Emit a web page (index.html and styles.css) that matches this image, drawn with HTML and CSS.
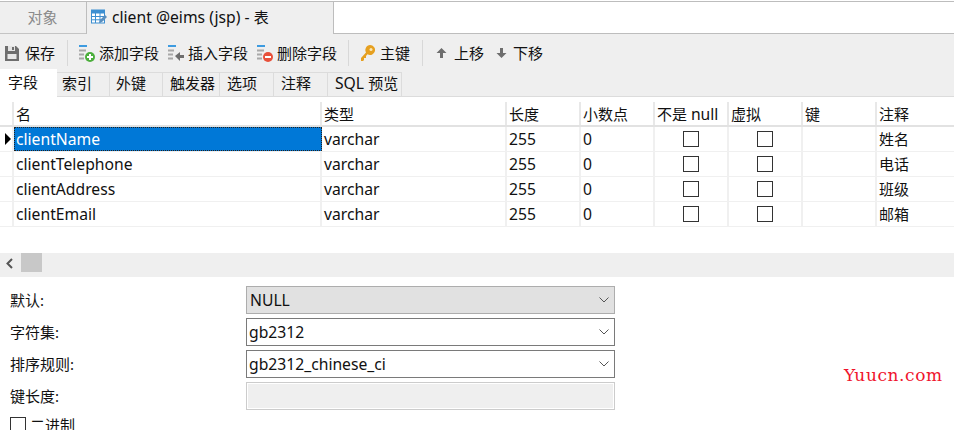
FILE: index.html
```html
<!DOCTYPE html>
<html lang="zh">
<head>
<meta charset="utf-8">
<title>client @eims (jsp) - 表</title>
<link rel="stylesheet" href="styles.css">
</head>
<body>
<div class="tabbar">
  <div class="tab tab-objects">对象</div>
  <div class="tab tab-active">
    <svg class="tab-icon" width="16" height="16" viewBox="0 0 16 16"><rect x="0.5" y="1" width="13" height="13" fill="#fff" stroke="#3d8fd1"/><rect x="0.5" y="1" width="13" height="3.5" fill="#3d8fd1"/><path d="M4.5 4v10M9 4v10M1 7.5h12M1 10.8h12" stroke="#3d8fd1"/><path d="M8 14l1-3 5-5 2 2-5 5z" fill="#5a8fbf"/></svg>
    <span><span class="en">client @eims (jsp) - </span>表</span>
  </div>
  <div class="tab-rest"></div>
</div>

<div class="toolbar">
  <div class="tool tool-save">
    <svg width="14" height="16" viewBox="0 0 14 16"><path d="M0 1h11l3 3v12H0z" fill="#6e6e6e"/><rect x="3" y="1" width="7" height="5" fill="#e4e4e4"/><rect x="7" y="2" width="2" height="3" fill="#6e6e6e"/><rect x="2.500" y="9" width="9" height="5" fill="#e8e8e8"/></svg>
    <span>保存</span>
  </div>
  <i class="sep sep-a"></i>
  <div class="tool tool-add">
    <svg width="16" height="18" viewBox="0 0 16 18"><rect y="1" width="8" height="2" fill="#3d9be0"/><path d="M0 6.500h7M0 10.500h5M0 14.500h5" stroke="#a8a8a8" stroke-width="2"/><circle cx="11" cy="13" r="5" fill="#4cae3c"/><path d="M8 13h6M11 10v6" stroke="#fff" stroke-width="2"/></svg>
    <span>添加字段</span>
  </div>
  <div class="tool tool-insert">
    <svg width="16" height="18" viewBox="0 0 16 18"><rect y="1" width="8" height="2" fill="#3d9be0"/><path d="M0 6.500h6M0 10.500h5M0 14.500h5" stroke="#a8a8a8" stroke-width="2"/><path d="M7 12l5-4v3h4v3h-4v3z" fill="#6e6e6e"/></svg>
    <span>插入字段</span>
  </div>
  <div class="tool tool-delete">
    <svg width="16" height="18" viewBox="0 0 16 18"><rect y="1" width="8" height="2" fill="#3d9be0"/><path d="M0 6.500h7M0 10.500h5M0 14.500h5" stroke="#a8a8a8" stroke-width="2"/><circle cx="11" cy="13" r="5" fill="#e8503a"/><path d="M8 13h6" stroke="#fff" stroke-width="2"/></svg>
    <span>删除字段</span>
  </div>
  <i class="sep sep-b"></i>
  <div class="tool tool-key">
    <svg width="14" height="16" viewBox="0 0 14 16"><path d="M9 0a5 5 0 1 1-2.500 9.300L5 11v2H3v2l-1 1H0v-3l5-5.500A5 5 0 0 1 9 0z" fill="#e6a020"/><circle cx="10" cy="4.500" r="1.500" fill="#fbe7b5"/></svg>
    <span>主键</span>
  </div>
  <i class="sep sep-c"></i>
  <div class="tool tool-up">
    <svg width="11" height="12" viewBox="0 0 11 12"><path d="M5.500 1L10.500 6H7v5H4V6H.5z" fill="#6e6e6e"/></svg>
    <span>上移</span>
  </div>
  <div class="tool tool-down">
    <svg width="11" height="12" viewBox="0 0 11 12"><path d="M5.500 11L10.500 6H7V1H4v5H.5z" fill="#6e6e6e"/></svg>
    <span>下移</span>
  </div>
</div>

<div class="subtabs">
  <div class="subtab subtab-active">字段</div>
  <div class="subtab w53 first">索引</div>
  <div class="subtab w53">外键</div>
  <div class="subtab w57">触发器</div>
  <div class="subtab w54">选项</div>
  <div class="subtab w54">注释</div>
  <div class="subtab w74"><span class="en">SQL </span>预览</div>
</div>

<div class="grid">
  <div class="row head">
    <div class="c c0"></div><div class="c">名</div><div class="c">类型</div><div class="c">长度</div><div class="c">小数点</div><div class="c"><span>不是 <span class="en">null</span></span></div><div class="c">虚拟</div><div class="c">键</div><div class="c">注释</div>
  </div>
  <div class="row">
    <div class="c c0"><i class="pointer"></i></div><div class="c en selected">clientName</div><div class="c en">varchar</div><div class="c en">255</div><div class="c en">0</div><div class="c cc"><i class="check"></i></div><div class="c cc"><i class="check"></i></div><div class="c"></div><div class="c">姓名</div>
  </div>
  <div class="row">
    <div class="c c0"></div><div class="c en">clientTelephone</div><div class="c en">varchar</div><div class="c en">255</div><div class="c en">0</div><div class="c cc"><i class="check"></i></div><div class="c cc"><i class="check"></i></div><div class="c"></div><div class="c">电话</div>
  </div>
  <div class="row">
    <div class="c c0"></div><div class="c en">clientAddress</div><div class="c en">varchar</div><div class="c en">255</div><div class="c en">0</div><div class="c cc"><i class="check"></i></div><div class="c cc"><i class="check"></i></div><div class="c"></div><div class="c">班级</div>
  </div>
  <div class="row">
    <div class="c c0"></div><div class="c en">clientEmail</div><div class="c en">varchar</div><div class="c en">255</div><div class="c en">0</div><div class="c cc"><i class="check"></i></div><div class="c cc"><i class="check"></i></div><div class="c"></div><div class="c">邮箱</div>
  </div>
</div>

<div class="hscroll">
  <svg class="hscroll-arrow" width="9" height="11" viewBox="0 0 9 11"><path d="M7 1L2.500 5.500 7 10" fill="none" stroke="#555" stroke-width="2"/></svg>
  <div class="hscroll-thumb"></div>
</div>

<div class="form">
  <label class="lbl">默认:</label>
  <div class="select select-disabled"><span class="en">NULL</span><svg width="10" height="6" viewBox="0 0 10 6"><path d="M.5 .5L5 5 9.500 .5" fill="none" stroke="#555"/></svg></div>
  <label class="lbl">字符集:</label>
  <div class="select"><span class="en">gb2312</span><svg width="10" height="6" viewBox="0 0 10 6"><path d="M.5 .5L5 5 9.500 .5" fill="none" stroke="#555"/></svg></div>
  <label class="lbl">排序规则:</label>
  <div class="select"><span class="en">gb2312_chinese_ci</span><svg width="10" height="6" viewBox="0 0 10 6"><path d="M.5 .5L5 5 9.500 .5" fill="none" stroke="#555"/></svg></div>
  <label class="lbl">键长度:</label>
  <div class="input-disabled"></div>
</div>
<div class="binary"><i class="check"></i><span>二进制</span></div>
<div class="watermark">Yuucn.com</div>
</body>
</html>
```
FILE: styles.css
```css
* { box-sizing: border-box; }
html, body { margin: 0; padding: 0; }
body {
  position: relative;
  width: 954px;
  height: 430px;
  overflow: hidden;
  background: #fff;
  color: #111;
  font: 15px/20px "Noto Sans", "Noto Sans CJK SC", sans-serif;
}
.en { font-size: 15.7px; }
.tabbar {
  display: flex;
  height: 33px;
  margin-top: 1px;
  border-top: 1px solid #bdbdbd;
  background: #efefef;
}
.tab { display: flex; align-items: center; height: 32px; padding-bottom: 2px; }
.tab-objects {
  width: 86px;
  justify-content: center;
  color: #8a8a8a;
  border-bottom: 1px solid #c4c4c4;
  padding-right: 1px;
}
.tab-active {
  width: 247px;
  gap: 5px;
  padding-left: 4px;
  border-left: 1px solid #bdbdbd;
  color: #111;
}
.tab-rest {
  flex: 1;
  height: 32px;
  background: #fff;
  border-left: 1px solid #bdbdbd;
  border-bottom: 1px solid #bdbdbd;
}
.toolbar {
  display: flex;
  align-items: center;
  height: 36px;
  padding: 2px 0 0 5px;
  background: #efefef;
}
.tool { display: flex; align-items: center; }
.tool-save { gap: 6px; }
.tool-add, .tool-insert, .tool-delete { gap: 4px; }
.tool-insert, .tool-delete { margin-left: 9px; }
.tool-key { gap: 5px; }
.tool-up { gap: 7px; }
.tool-down { gap: 6px; margin-left: 12px; }
.sep { width: 1px; height: 26px; background: #d8d8d8; }
.sep-a { margin: 0 11px 0 12px; }
.sep-b { margin: 0 12px 0 11px; }
.sep-c { margin: 0 13px 0 12px; }
.subtabs {
  display: flex;
  align-items: flex-end;
  height: 27px;
  background: #efefef;
  border-bottom: 1px solid #dcdcdc;
}
.subtab {
  height: 24px;
  padding-left: 5px;
  line-height: 21px;
  border-right: 1px solid #dcdcdc;
  border-top: 1px solid #dcdcdc;
}
.subtab-active {
  width: 57px;
  height: 28px;
  margin-bottom: -1px;
  padding-left: 8px;
  background: #fff;
  border: 0;
  line-height: 26px;
}
.w53 { width: 53px; padding-left: 6px; }
.w53.first { padding-left: 5px; }
.w57 { width: 57px; padding-left: 7px; }
.w54 { width: 54px; padding-left: 7px; }
.w74 { width: 74px; padding-left: 7px; }
.grid { margin-top: 5px; }
.row {
  display: grid;
  grid-template-columns: 14px 308px 185px repeat(5, 74px) 1fr;
  height: 25px;
  border-bottom: 1px solid #f0f0f0;
}
.row.head { height: 25px; border-bottom: 2px solid #e2e2e2; }
.c {
  display: flex;
  align-items: center;
  padding-left: 2px;
  border-right: 2px solid #f0f0f0;
  min-width: 0;
  white-space: nowrap;
}
.c:last-child { border-right: 0; }
.head .c { border-right-color: #e8e8e8; }
.cc { justify-content: center; padding: 0; }
.c0 { position: relative; padding: 0; }
.pointer {
  width: 0;
  height: 0;
  margin-left: 5px;
  border-left: 6px solid #000;
  border-top: 6px solid transparent;
  border-bottom: 6px solid transparent;
}
.selected {
  background: #0078d7;
  color: #fff;
  border: 1px dotted #222;
  padding-left: 1px;
}
.check {
  display: block;
  width: 16px;
  height: 16px;
  border: 1px solid #333;
  background: #fff;
}
.hscroll {
  display: flex;
  align-items: flex-start;
  height: 24px;
  margin-top: 26px;
  background: #efefef;
}
.hscroll-arrow { margin: 5px 7px 0 5px; }
.hscroll-thumb { width: 21px; height: 19px; background: #c8c8c8; }
.form {
  display: grid;
  grid-template-columns: 236px 369px;
  grid-auto-rows: 28px;
  row-gap: 4px;
  margin: 9px 0 0 10px;
}
.lbl { display: flex; align-items: center; }
.select {
  display: flex;
  align-items: center;
  justify-content: space-between;
  padding: 0 5px 0 2px;
  border: 1px solid #7a7a7a;
  background: #fff;
}
.select-disabled {
  padding-left: 3px;
  border-color: #adadad;
  background: #e1e1e1;
}
.input-disabled { border: 1px solid #ccc; background: #efefef; box-shadow: inset 0 0 0 1px #fff; }
.binary { display: flex; align-items: center; gap: 4px; margin: 5px 0 0 10px; }
.watermark {
  position: absolute;
  left: 844px;
  top: 365px;
  color: #f0142d;
  font: 17px/20px "DejaVu Serif", serif;
  letter-spacing: 0.6px;
}
```
